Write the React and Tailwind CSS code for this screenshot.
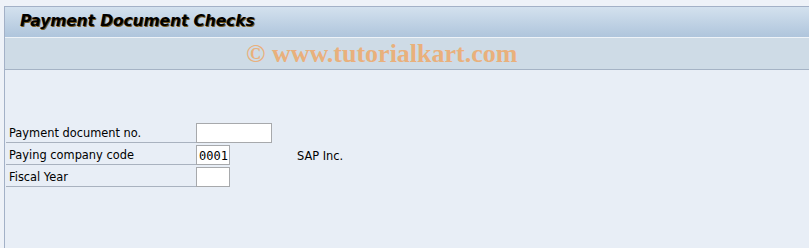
export default function App() {
  const rows = [
    { label: "Payment document no.", w: "w-[76px]", value: "", extra: "" },
    { label: "Paying company code", w: "w-[34px]", value: "0001", extra: "SAP Inc." },
    { label: "Fiscal Year", w: "w-[34px]", value: "", extra: "" },
  ];
  return (
    <div className="w-[809px] h-[248px] bg-[#eef2f8] pt-[6px] pl-[4px] overflow-hidden">
      <div className="h-[242px] border-l border-t border-[#a3b1c7] bg-[#e8eef6] flex flex-col">
        <div className="h-[30px] bg-gradient-to-b from-[#d3e1ee] to-[#afc5dc] flex items-center pl-[15px]">
          <span className="font-['DejaVu_Sans',sans-serif] font-bold italic text-[15.5px] text-black tracking-[-0.1px] [text-shadow:1px_1px_0_#7a5a20]">
            Payment Document Checks
          </span>
        </div>
        <div className="h-px bg-[#eef3f8]" />
        <div className="h-[32px] bg-[#cedbe6] border-b border-[#a5b3c5] flex items-center pl-[241px]">
          <span className="font-['Liberation_Serif',serif] font-bold text-[26px] text-[#e9b07c] leading-none">
            © www.tutorialkart.com
          </span>
        </div>
        <div className="pt-[53px] flex flex-col gap-[2px]">
          {rows.map((r) => (
            <div key={r.label} className="flex items-end h-[20px]">
              <div className="w-[190px] h-[20px] border-b border-[#a9b2bf] ml-[1px] flex items-center pl-[3px] pt-[3px]">
                <span className="font-['DejaVu_Sans',sans-serif] text-[11.4px] text-black leading-none">{r.label}</span>
              </div>
              <div className={`${r.w} h-[20px] bg-white border border-[#a7a9ac] flex items-center pl-[2px] pt-[1px]`}>
                <span className="font-['DejaVu_Sans_Mono',monospace] text-[12px] text-black leading-none">{r.value}</span>
              </div>
              {r.extra && (
                <div className="ml-[67px] h-[20px] flex items-center pt-[3px]">
                  <span className="font-['DejaVu_Sans',sans-serif] text-[11.4px] text-black leading-none">{r.extra}</span>
                </div>
              )}
            </div>
          ))}
        </div>
      </div>
    </div>
  );
}
